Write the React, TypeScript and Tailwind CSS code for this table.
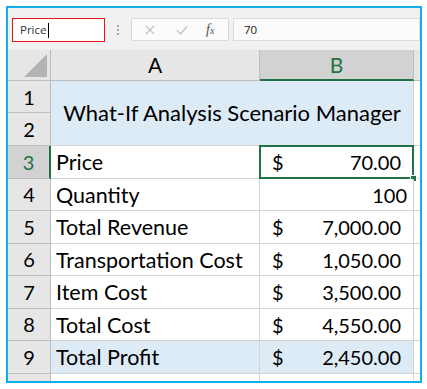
import React from 'react';

const cellFont = { fontFamily: 'Lato, "Open Sans", sans-serif' };

interface Row {
  n: number;
  label: string;
  value: string;
  dollar: boolean;
  tail: string;
}

const rows: Row[] = [
  { n: 3, label: 'Price', value: '70.00', dollar: true, tail: 'pr-[12px]' },
  { n: 4, label: 'Quantity', value: '100', dollar: false, tail: 'pr-[6px]' },
  { n: 5, label: 'Total Revenue', value: '7,000.00', dollar: true, tail: 'pr-[12px]' },
  { n: 6, label: 'Transportation Cost', value: '1,050.00', dollar: true, tail: 'pr-[12px]' },
  { n: 7, label: 'Item Cost', value: '3,500.00', dollar: true, tail: 'pr-[12px]' },
  { n: 8, label: 'Total Cost', value: '4,550.00', dollar: true, tail: 'pr-[12px]' },
  { n: 9, label: 'Total Profit', value: '2,450.00', dollar: true, tail: 'pr-[12px]' },
];

const Toolbar: React.FC = () => (
  <div className="flex h-[42px] items-start bg-[#f1f1f1] pl-[4px] pt-[10px]" style={{ fontFamily: '"Open Sans", "Noto Sans", sans-serif' }}>
    <div className="flex h-[24px] w-[93px] items-center border border-[#e8141a] bg-white pl-[7px] text-[11.5px] text-[#333]">
      Price
      <span className="ml-px inline-block h-[15px] w-px bg-black" />
    </div>
    <div className="ml-[12px] mt-[7px] flex flex-col gap-[2px]">
      <span className="block h-[2px] w-[2px] bg-[#a8a8a8]" />
      <span className="block h-[2px] w-[2px] bg-[#a8a8a8]" />
      <span className="block h-[2px] w-[2px] bg-[#a8a8a8]" />
    </div>
    <div className="ml-[12px] flex h-[23px] w-[98px] items-center border border-[#dcdcdc] bg-[#fbfbfb]">
      <svg width="10" height="10" viewBox="0 0 10 10" className="ml-[13px]">
        <path d="M1 1 L9 9 M9 1 L1 9" stroke="#c4c4c4" strokeWidth="1.3" />
      </svg>
      <svg width="12" height="10" viewBox="0 0 12 10" className="ml-[21px]">
        <path d="M1 5.5 L4.5 9 L11 1.5" stroke="#c4c4c4" strokeWidth="1.5" fill="none" />
      </svg>
      <span className="ml-[18px] text-[14px] italic text-[#555]" style={{ fontFamily: '"Liberation Serif", serif' }}>
        f<span className="text-[10px]">x</span>
      </span>
    </div>
    <div className="ml-[4px] flex h-[23px] flex-1 items-center border border-[#dcdcdc] bg-[#fbfbfb] pl-[10px] text-[11.5px] text-[#222]">
      70
    </div>
  </div>
);

const App: React.FC = () => {
  return (
    <div className="h-[389px] w-[427px] bg-white p-[6px]">
      <div className="h-[377px] w-[416px] overflow-hidden border-2 border-[#12aee8] bg-white">
        <Toolbar />
        <div className="grid grid-cols-[43px_209px_154px_1fr] text-black" style={cellFont}>
          {/* column headers */}
          <div className="relative h-[31px] border-b border-r border-[#bdbdbd] bg-[#e6e6e6]">
            <svg width="23" height="23" viewBox="0 0 23 23" className="absolute right-[3px] bottom-[3px]">
              <polygon points="23,0 23,23 0,23" fill="#b4b4b4" />
            </svg>
          </div>
          <div className="flex h-[31px] items-center justify-center border-b border-r border-[#bdbdbd] bg-[#e6e6e6] text-[21px]">A</div>
          <div className="flex h-[31px] items-center justify-center border-b-2 border-r border-b-[#217346] border-r-[#bdbdbd] bg-[#d2d2d2] text-[21px] text-[#217346]">B</div>
          <div className="h-[31px] border-b border-[#bdbdbd] bg-[#e6e6e6]" />

          {/* rows 1-2 */}
          <div className="flex h-[32px] items-center justify-center border-b border-r border-[#bdbdbd] bg-[#e6e6e6] text-[20px]">1</div>
          <div className="col-span-2 row-span-2 flex items-center justify-center border-b border-r border-[#d4d4d4] bg-[#ddebf7] pb-[2px] text-[22px]">
            What-If Analysis Scenario Manager
          </div>
          <div className="row-span-2 border-b border-[#d4d4d4]" />
          <div className="flex h-[33px] items-center justify-center border-b border-r border-[#bdbdbd] bg-[#e6e6e6] text-[20px]">2</div>

          {rows.map((r) => {
            const active = r.n === 3;
            const blue = r.n === 9;
            return (
              <React.Fragment key={r.n}>
                <div
                  className={`flex h-[32.5px] items-center justify-center border-b text-[20px] ${
                    active
                      ? 'border-r-2 border-b-[#bdbdbd] border-r-[#217346] bg-[#d2d2d2] text-[#217346]'
                      : 'border-r border-[#bdbdbd] bg-[#e6e6e6]'
                  }`}
                >
                  {r.n}
                </div>
                <div className={`flex h-[32.5px] items-center border-b border-r border-[#d4d4d4] pl-[5px] pt-[1px] text-[21.5px] ${blue ? 'bg-[#ddebf7]' : 'bg-white'}`}>
                  {r.label}
                </div>
                <div className={`relative flex h-[32.5px] items-center border-b border-r border-[#d4d4d4] pt-[1px] text-[20px] ${r.tail} ${blue ? 'bg-[#ddebf7]' : 'bg-white'}`}>
                  {r.dollar && <span className="pl-[12px]">$</span>}
                  <span className="ml-auto">{r.value}</span>
                  {active && (
                    <div className="absolute -left-px -top-px h-[34px] w-[155px] border-2 border-[#217346]">
                      <span className="absolute -bottom-[4px] -right-[4px] block h-[5px] w-[5px] bg-[#217346] outline outline-1 outline-white" />
                    </div>
                  )}
                </div>
                <div className="h-[32.5px] border-b border-[#d4d4d4]" />
              </React.Fragment>
            );
          })}

          {/* partial row 10 */}
          <div className="h-[10px] border-r border-[#bdbdbd] bg-[#e6e6e6]" />
          <div className="h-[10px] border-r border-[#d4d4d4]" />
          <div className="h-[10px] border-r border-[#d4d4d4]" />
          <div className="h-[10px]" />
        </div>
      </div>
    </div>
  );
};

export default App;
